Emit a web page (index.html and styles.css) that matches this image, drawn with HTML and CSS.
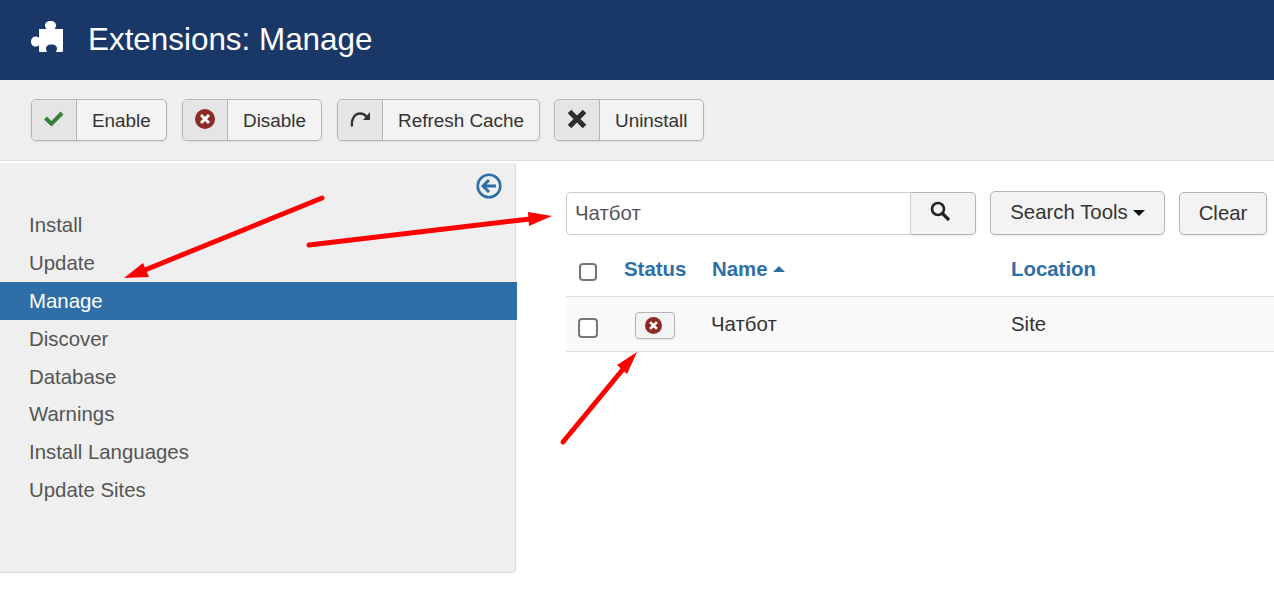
FILE: index.html
```html
<!DOCTYPE html>
<html lang="en">
<head>
    <meta charset="utf-8">
    <title>Extensions: Manage</title>
    <link rel="stylesheet" href="styles.css">
</head>
<body>
    <header class="topbar">
        <svg class="puzzle" viewBox="0 0 33 32" width="33" height="32"><path fill="#fff" d="M8 8H15.500C14.600 6.800 14 6 14 4.200 14 1.600 16.400 0 19.500 0 22.600 0 25 1.600 25 4.200 25 6 24.400 6.800 23.500 8H32V30a1 1 0 0 1-1 1H25C25.600 29.500 26 28.500 26 27.500 26 25 23.500 23.500 20.500 23.500 17.500 23.500 15 25 15 27.500 15 28.500 15.400 29.500 16 31H9a1 1 0 0 1-1-1V24C7 25 6 25.500 4.500 25.500 2 25.500 0 23.500 0 20.500 0 17.500 2 15.500 4.500 15.500 6 15.500 7 16 8 17Z"/></svg>
        <h1 class="title">Extensions: Manage</h1>
    </header>

    <div class="toolbar">
        <button class="tool tool-enable">
            <span class="tool-icon"><svg viewBox="0 0 20 16" width="20" height="16"><path fill="#378137" d="M0 8.500 3 5.500 7.500 10 16.500 0.500 19.500 3.500 7.500 15.500Z"/></svg></span>
            <span class="tool-label">Enable</span>
        </button>
        <button class="tool tool-disable">
            <span class="tool-icon"><svg viewBox="0 0 20 20" width="20" height="20"><circle cx="10" cy="10" r="10" fill="#8c2b24"/><path d="M6 6 14 14M14 6 6 14" stroke="#fff" stroke-width="3"/></svg></span>
            <span class="tool-label">Disable</span>
        </button>
        <button class="tool tool-refresh">
            <span class="tool-icon"><svg viewBox="0 0 20 20" width="20" height="20"><path fill="none" stroke="#333" stroke-width="2.300" d="M2 17.500C1 10 5 4.500 10 4.500 12.500 4.500 15 5.500 16.500 8"/><path fill="#333" d="M20 3V11H13Z"/></svg></span>
            <span class="tool-label">Refresh Cache</span>
        </button>
        <button class="tool tool-uninstall">
            <span class="tool-icon"><svg viewBox="0 0 20 20" width="20" height="20"><path d="M2.500 2.500 17.500 17.500M17.500 2.500 2.500 17.500" stroke="#2d2d2d" stroke-width="5"/></svg></span>
            <span class="tool-label">Uninstall</span>
        </button>
    </div>

    <div class="main">
        <aside class="sidebar">
            <div class="collapse">
                <svg viewBox="0 0 26 26" width="26" height="26"><circle cx="13" cy="13" r="11.300" fill="none" stroke="#2f6fa8" stroke-width="2.600"/><path d="M20 13H8M13 7 7 13 13 19" fill="none" stroke="#2f6fa8" stroke-width="3"/></svg>
            </div>
            <ul class="menu">
                <li>Install</li>
                <li>Update</li>
                <li class="active">Manage</li>
                <li>Discover</li>
                <li>Database</li>
                <li>Warnings</li>
                <li>Install Languages</li>
                <li>Update Sites</li>
            </ul>
        </aside>

        <section class="content">
            <div class="filters">
                <div class="search">
                    <input class="search-input" type="text" value="Чатбот">
                    <button class="search-btn"><svg viewBox="0 0 20 20" width="20" height="20"><circle cx="8" cy="8" r="6" fill="none" stroke="#222" stroke-width="2.600"/><path d="M12.500 12.500 19 19" stroke="#222" stroke-width="3.200"/></svg></button>
                </div>
                <button class="btn tools-btn">Search Tools<span class="caret"></span></button>
                <button class="btn clear-btn">Clear</button>
            </div>

            <table class="list">
                <thead>
                    <tr>
                        <th class="col-check"><input class="check check-all" type="checkbox"></th>
                        <th class="col-status">Status</th>
                        <th class="col-name">Name<span class="caret-up"></span></th>
                        <th>Location</th>
                    </tr>
                </thead>
                <tbody>
                    <tr>
                        <td><input class="check" type="checkbox"></td>
                        <td><button class="status-btn"><svg viewBox="0 0 20 20" width="17" height="17"><circle cx="10" cy="10" r="10" fill="#8c2b24"/><path d="M6 6 14 14M14 6 6 14" stroke="#fff" stroke-width="3"/></svg></button></td>
                        <td class="cell-text cell-name">Чатбот</td>
                        <td class="cell-text">Site</td>
                    </tr>
                </tbody>
            </table>
        </section>
    </div>

    <!-- red arrows drawn on top of the screenshot -->
    <svg class="arrows" viewBox="0 0 1274 591" width="1274" height="591">
        <g stroke="#f00" stroke-width="5" stroke-linecap="round" fill="#f00">
            <line x1="322" y1="198" x2="140" y2="272"/>
            <line x1="309" y1="245" x2="530" y2="219"/>
            <line x1="563" y1="442" x2="624" y2="368"/>
        </g>
        <g fill="#f00">
            <polygon points="124,278 143,263 149,277"/>
            <polygon points="552,216 528,212 529,226"/>
            <polygon points="637,352 617,365 627,374"/>
        </g>
    </svg>
</body>
</html>
```
FILE: styles.css
```css
* { box-sizing: border-box; }
html, body { margin: 0; padding: 0; }
body { width: 1274px; height: 591px; overflow: hidden; background: #fff; color: #333; font-family: "Liberation Sans", Arial, sans-serif; font-size: 20.4px; position: relative; }
button { font-family: inherit; color: inherit; cursor: pointer; }

.topbar { height: 80px; background: #1a3867; color: #fff; display: flex; align-items: center; padding-left: 31px; }
.puzzle { margin-top: -6px; }
.title { margin: 0 0 0 24px; font-size: 31.4px; font-weight: 400; }

.toolbar { height: 81px; background: #efefef; border-bottom: 1px solid #ddd; display: flex; gap: 15px; padding: 19px 0 0 31px; }
.tool { height: 42px; padding: 0; display: flex; background: #f3f3f3; border: 1px solid #b5b5b5; border-radius: 5px; box-shadow: 0 1px 2px rgba(0, 0, 0, .08); font-size: 18.9px; overflow: hidden; }
.tool-enable { width: 136px; }
.tool-disable { width: 140px; }
.tool-refresh { width: 203px; }
.tool-uninstall { width: 150px; margin-left: -1px; }
.tool-icon { flex: none; width: 45px; height: 100%; background: #e5e5e5; border-right: 1px solid #b5b5b5; display: flex; align-items: center; justify-content: center; padding-bottom: 3px; }
.tool-label { height: 100%; padding: 2px 0 0 15px; display: flex; align-items: center; }

.main { display: flex; align-items: flex-start; margin-top: 2px; }

.sidebar { width: 516px; height: 410px; background: #efefef; border-right: 1px solid #ddd; border-bottom: 1px solid #ddd; border-bottom-right-radius: 4px; }
.collapse { height: 43.4px; display: flex; justify-content: flex-end; padding: 10px 13px 0 0; }
.menu { list-style: none; margin: 0; padding: 0; color: #555; }
.menu li { height: 37.8px; padding: 2px 0 0 29px; line-height: 35.8px; }
.menu .active { background: #2f6fa8; color: #fff; margin-right: -2px; }

.content { flex: 1; padding: 28px 0 0 50px; }
.filters { display: flex; align-items: center; height: 44px; }
.search { display: flex; width: 410px; height: 43px; }
.search-input { flex: 1; min-width: 0; height: 100%; padding: 0 8px; border: 1px solid #ccc; border-right: 0; border-radius: 5px 0 0 5px; font-family: inherit; font-size: 20.4px; color: #555; outline: none; }
.search-btn { width: 66px; height: 100%; padding: 0 7px 5px 0; background: #f3f3f3; border: 1px solid #b5b5b5; border-left-color: #ccc; border-radius: 0 5px 5px 0; box-shadow: 0 1px 2px rgba(0, 0, 0, .08); display: flex; align-items: center; justify-content: center; }
.btn { height: 43px; margin-left: 14px; background: #f3f3f3; border: 1px solid #b5b5b5; border-radius: 5px; box-shadow: 0 1px 2px rgba(0, 0, 0, .08); font-size: 20.4px; }
.tools-btn { width: 175px; height: 44px; margin-bottom: 1px; padding: 0 0 1px; }
.clear-btn { width: 88px; padding: 0; }
.caret { display: inline-block; margin-left: 5px; vertical-align: middle; border-top: 6px solid #111; border-left: 6px solid transparent; border-right: 6px solid transparent; }

.list { width: 708px; margin-top: 15px; border-collapse: collapse; table-layout: fixed; }
.list th { height: 46px; padding: 0 0 6px; text-align: left; color: #2f6fa8; font-weight: 700; border-bottom: 1px solid #ddd; }
.list td { height: 55px; padding: 0; background: #f9f9f9; border-bottom: 1px solid #ddd; }
.list .cell-text { padding-top: 2px; }
.list .cell-name { text-indent: -1px; }
.col-check { width: 58px; }
.col-status { width: 88px; }
.col-name { width: 299px; }
.caret-up { display: inline-block; margin-left: 5px; vertical-align: 4px; border-bottom: 6px solid #2f6fa8; border-left: 6px solid transparent; border-right: 6px solid transparent; }
.check { appearance: none; display: block; width: 20px; height: 20px; margin: 8px 0 0 12px; background: #fff; border: 2px solid #767676; border-radius: 4px; }
.check-all { width: 18px; height: 18px; margin: 4px 0 0 13px; }
.status-btn { width: 40px; height: 27px; margin: 3px 0 0 11px; padding: 0 3px 0 0; background: #f3f3f3; border: 1px solid #b5b5b5; border-radius: 4px; box-shadow: 0 1px 2px rgba(0, 0, 0, .08); display: flex; align-items: center; justify-content: center; }

.arrows { position: absolute; left: 0; top: 0; pointer-events: none; }
```
